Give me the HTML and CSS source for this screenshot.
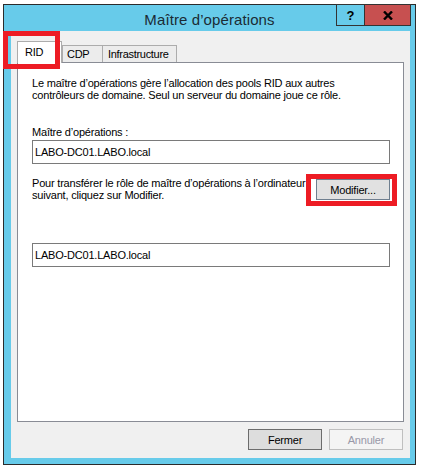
FILE: index.html
```html
<!DOCTYPE html>
<html lang="fr">
<head>
<meta charset="utf-8">
<title>Maître d’opérations</title>
<link rel="stylesheet" href="styles.css">
</head>
<body>
<div class="desk">
  <div class="win">
    <div class="titlebar">
      <span class="title">Maître d’opérations</span>
      <div class="caps">
        <div class="cap help">?</div>
        <div class="cap close">
          <svg width="10" height="9" viewBox="0 0 10 9"><path d="M1 0.5 L9 8.5 M9 0.5 L1 8.5" stroke="#000" stroke-width="2.4" fill="none"/></svg>
        </div>
      </div>
    </div>
    <div class="client">
      <div class="tabs">
        <div class="tab tab-rid active">RID</div>
        <div class="tab tab-cdp">CDP</div>
        <div class="tab tab-infra">Infrastructure</div>
      </div>
      <div class="panel">
        <p class="para">Le maître d’opérations gère l’allocation des pools RID aux autres<br>contrôleurs de domaine. Seul un serveur du domaine joue ce rôle.</p>
        <div class="label">Maître d’opérations :</div>
        <div class="textbox">LABO-DC01.LABO.local</div>
        <div class="row">
          <p class="para">Pour transférer le rôle de maître d’opérations à l’ordinateur<br>suivant, cliquez sur Modifier.</p>
          <div class="btn btn-mod">Modifier...</div>
        </div>
        <div class="textbox tb2">LABO-DC01.LABO.local</div>
      </div>
      <div class="footer">
        <div class="btn btn-default">Fermer</div>
        <div class="btn btn-disabled">Annuler</div>
      </div>
    </div>
  </div>
  <div class="hl hl-rid"></div>
  <div class="hl hl-mod"></div>
</div>
</body>
</html>
```
FILE: styles.css
```css
html, body {
  margin: 0;
  padding: 0;
}
body {
  background: #ffffff;
  font-family: "Liberation Sans", Arial, sans-serif;
  font-size: 11px;
  color: #000;
}
.desk {
  position: relative;
  width: 422px;
  height: 475px;
  box-sizing: border-box;
  padding: 4px 0 0 3px;
  overflow: hidden;
}
.win {
  width: 413px;
  height: 461px;
  box-sizing: border-box;
  border: 1px solid #2b2b2b;
  background: #67cbea;
  display: flex;
  flex-direction: column;
  padding: 0 5px 6px 7px;
}
.titlebar {
  height: 26px;
  flex: none;
  display: grid;
  grid-template-columns: 1fr auto 1fr;
  align-items: start;
  margin: 0 -5px 0 -7px;
}
.title {
  grid-column: 2;
  font-size: 15px;
  line-height: 26px;
  margin-top: 2px;
  color: #1b2b35;
  letter-spacing: 0.1px;
  white-space: nowrap;
}
.caps {
  grid-column: 3;
  justify-self: end;
  display: flex;
  height: 22px;
  box-sizing: border-box;
  border: 1px solid #333;
  margin-top: -1px;
  margin-right: 4px;
}
.cap {
  display: flex;
  align-items: center;
  justify-content: center;
}
.help {
  width: 27px;
  border-right: 1px solid #333;
  background: #67cbea;
  font-weight: bold;
  font-size: 13px;
  color: #000;
}
.close {
  width: 45px;
  background: #c75050;
}
.client {
  flex: 1;
  background: #f0f0f0;
  display: flex;
  flex-direction: column;
  padding: 10px 6px 8px 6px;
}
.tabs {
  height: 21px;
  display: flex;
  align-items: flex-end;
  position: relative;
  z-index: 1;
}
.tab {
  height: 17px;
  box-sizing: border-box;
  border: 1px solid #acacac;
  border-bottom: none;
  background: #ececec;
  line-height: 16px;
  white-space: nowrap;
  letter-spacing: -0.3px;
}
.tab.active {
  height: 22px;
  margin-bottom: -1px;
  background: #ffffff;
  padding-top: 2px;
}
.tab-rid {
  width: 45px;
  padding-left: 7px;
}
.tab-cdp {
  width: 41px;
  padding-left: 4px;
}
.tab-infra {
  width: 74px;
  padding-left: 5px;
  border-left: none;
}
.panel {
  height: 360px;
  box-sizing: border-box;
  border: 1px solid #898c95;
  background: #ffffff;
  padding: 14px 13px 0 14px;
  display: flex;
  flex-direction: column;
}
.para {
  margin: 0;
  line-height: 12px;
  letter-spacing: -0.2px;
  white-space: nowrap;
}
.label {
  margin-top: 25px;
  line-height: 12px;
  letter-spacing: -0.2px;
}
.textbox {
  margin-top: 2px;
  width: 358px;
  height: 24px;
  box-sizing: border-box;
  border: 1px solid #7a7a7a;
  padding-left: 2px;
  line-height: 22px;
  letter-spacing: -0.2px;
}
.tb2 {
  margin-top: 42px;
}
.row {
  margin-top: 13px;
  width: 358px;
  display: flex;
  justify-content: space-between;
  align-items: flex-start;
}
.btn {
  width: 74px;
  height: 21px;
  box-sizing: border-box;
  border: 1px solid #adadad;
  background: #e1e1e1;
  display: flex;
  align-items: center;
  justify-content: center;
  letter-spacing: -0.2px;
}
.btn-mod {
  margin-top: 2px;
  border-color: #6f7f8f;
}
.footer {
  margin-top: 7px;
  display: flex;
  justify-content: flex-end;
  gap: 7px;
  padding-right: 1px;
}
.btn-default {
  border-color: #6c6c6c;
  background: #dddddd;
}
.btn-disabled {
  border-color: #bfbfbf;
  background: #f4f4f4;
  color: #9898a8;
}
.hl {
  position: absolute;
  box-sizing: border-box;
  border: 5px solid #ed1c24;
  z-index: 5;
}
.hl-rid {
  left: 3px;
  top: 31px;
  width: 57px;
  height: 38px;
}
.hl-mod {
  left: 306px;
  top: 174px;
  width: 91px;
  height: 32px;
}
```
